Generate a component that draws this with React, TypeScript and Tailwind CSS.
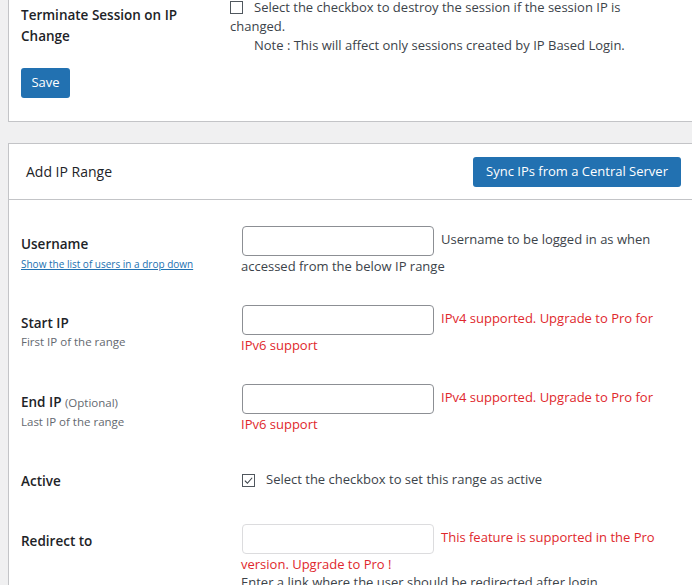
import type { ReactNode } from "react";

function Check({ checked }: { checked?: boolean }) {
  return (
    <span className="mr-[11px] inline-flex h-[13px] w-[13px] items-center justify-center border border-[#50575e] bg-white align-[-2px]">
      {checked && (
        <svg viewBox="0 0 12 12" className="h-[11px] w-[11px]">
          <path d="M2 6.2 L4.8 9 L10 3" fill="none" stroke="#3c434a" strokeWidth="1.2" />
        </svg>
      )}
    </span>
  );
}

function TextBox({ muted }: { muted?: boolean }) {
  return (
    <input
      type="text"
      disabled={muted}
      className={`mr-[7px] ml-px inline-block h-[30px] w-[192px] rounded-[4px] border bg-white align-middle ${
        muted ? "border-[#dcdcde]" : "border-[#8c8f94]"
      }`}
    />
  );
}

function Row({
  height,
  label,
  sub,
  children,
  top = "pt-[26px]",
}: {
  height: string;
  label: ReactNode;
  sub?: ReactNode;
  children: ReactNode;
  top?: string;
}) {
  return (
    <div className={`flex ${height}`}>
      <div className="w-[232px] shrink-0 pl-3 pt-[34px]">
        <div className="text-[13.5px] font-semibold leading-[20px] text-[#1d2327]">{label}</div>
        {sub}
      </div>
      <div className={`w-[427px] shrink-0 leading-[20px] ${top}`}>{children}</div>
    </div>
  );
}

export default function App() {
  return (
    <div className="h-[585px] overflow-hidden bg-[#f0f0f1] pl-2 font-['Open_Sans',sans-serif] text-[13px] text-[#3c434a]">
      {/* session settings panel (top is scrolled away) */}
      <div className="border-b border-l border-[#c3c4c7] bg-white pb-[23px]">
        <div className="flex">
          <div className="w-[221px] shrink-0 pl-3 pt-[5px]">
            <div className="w-[180px] text-[13.5px] font-semibold leading-[21px] text-[#1d2327]">
              Terminate Session on IP Change
            </div>
          </div>
          <div className="-mt-[2px] w-[438px] shrink-0 leading-[19px]">
            <Check />
            Select the checkbox to destroy the session if the session IP is changed.
            <div className="pl-[24px]">Note : This will affect only sessions created by IP Based Login.</div>
          </div>
        </div>
        <button className="mt-[13px] ml-3 h-[30px] w-[49px] rounded-[3px] bg-[#2271b1] text-[13px] text-white">
          Save
        </button>
      </div>

      {/* add ip range panel */}
      <div className="mt-[21px] border-t border-l border-[#c3c4c7] bg-white">
        <div className="flex h-[56px] items-center justify-between border-b border-[#c3c4c7] pr-[11px] pl-[17px]">
          <span className="text-[14px] text-[#1d2327]">Add IP Range</span>
          <button className="h-[30px] w-[208px] rounded-[3px] bg-[#2271b1] text-[13px] text-white">
            Sync IPs from a Central Server
          </button>
        </div>

        <Row
          height="h-[79px]"
          label="Username"
          sub={
            <a href="#" className="mt-[3px] block text-[10px] leading-[14px] text-[#2271b1] underline">
              Show the list of users in a drop down
            </a>
          }
        >
          <TextBox />
          Username to be logged in as when accessed from the below IP range
        </Row>

        <Row
          height="h-[79px]"
          label="Start IP"
          sub={<div className="text-[11.5px] leading-[18px] text-[#646970]">First IP of the range</div>}
        >
          <TextBox />
          <span className="text-[#e0282d]">IPv4 supported. Upgrade to Pro for IPv6 support</span>
        </Row>

        <Row
          height="h-[79px]"
          label={
            <>
              End IP <span className="text-[11.5px] font-normal text-[#646970]">(Optional)</span>
            </>
          }
          sub={<div className="text-[11.5px] leading-[18px] text-[#646970]">Last IP of the range</div>}
        >
          <TextBox />
          <span className="text-[#e0282d]">IPv4 supported. Upgrade to Pro for IPv6 support</span>
        </Row>

        <Row height="h-[60px]" label="Active" top="pt-[32px]">
          <span className="ml-px" />
          <Check checked />
          Select the checkbox to set this range as active
        </Row>

        <Row height="h-[120px]" label="Redirect to" top="pt-[27px]">
          <TextBox muted />
          <span className="text-[#e0282d]">This feature is supported in the Pro version. Upgrade to Pro !</span>
          <div className="leading-[17px]">Enter a link where the user should be redirected after login</div>
        </Row>
      </div>
    </div>
  );
}
